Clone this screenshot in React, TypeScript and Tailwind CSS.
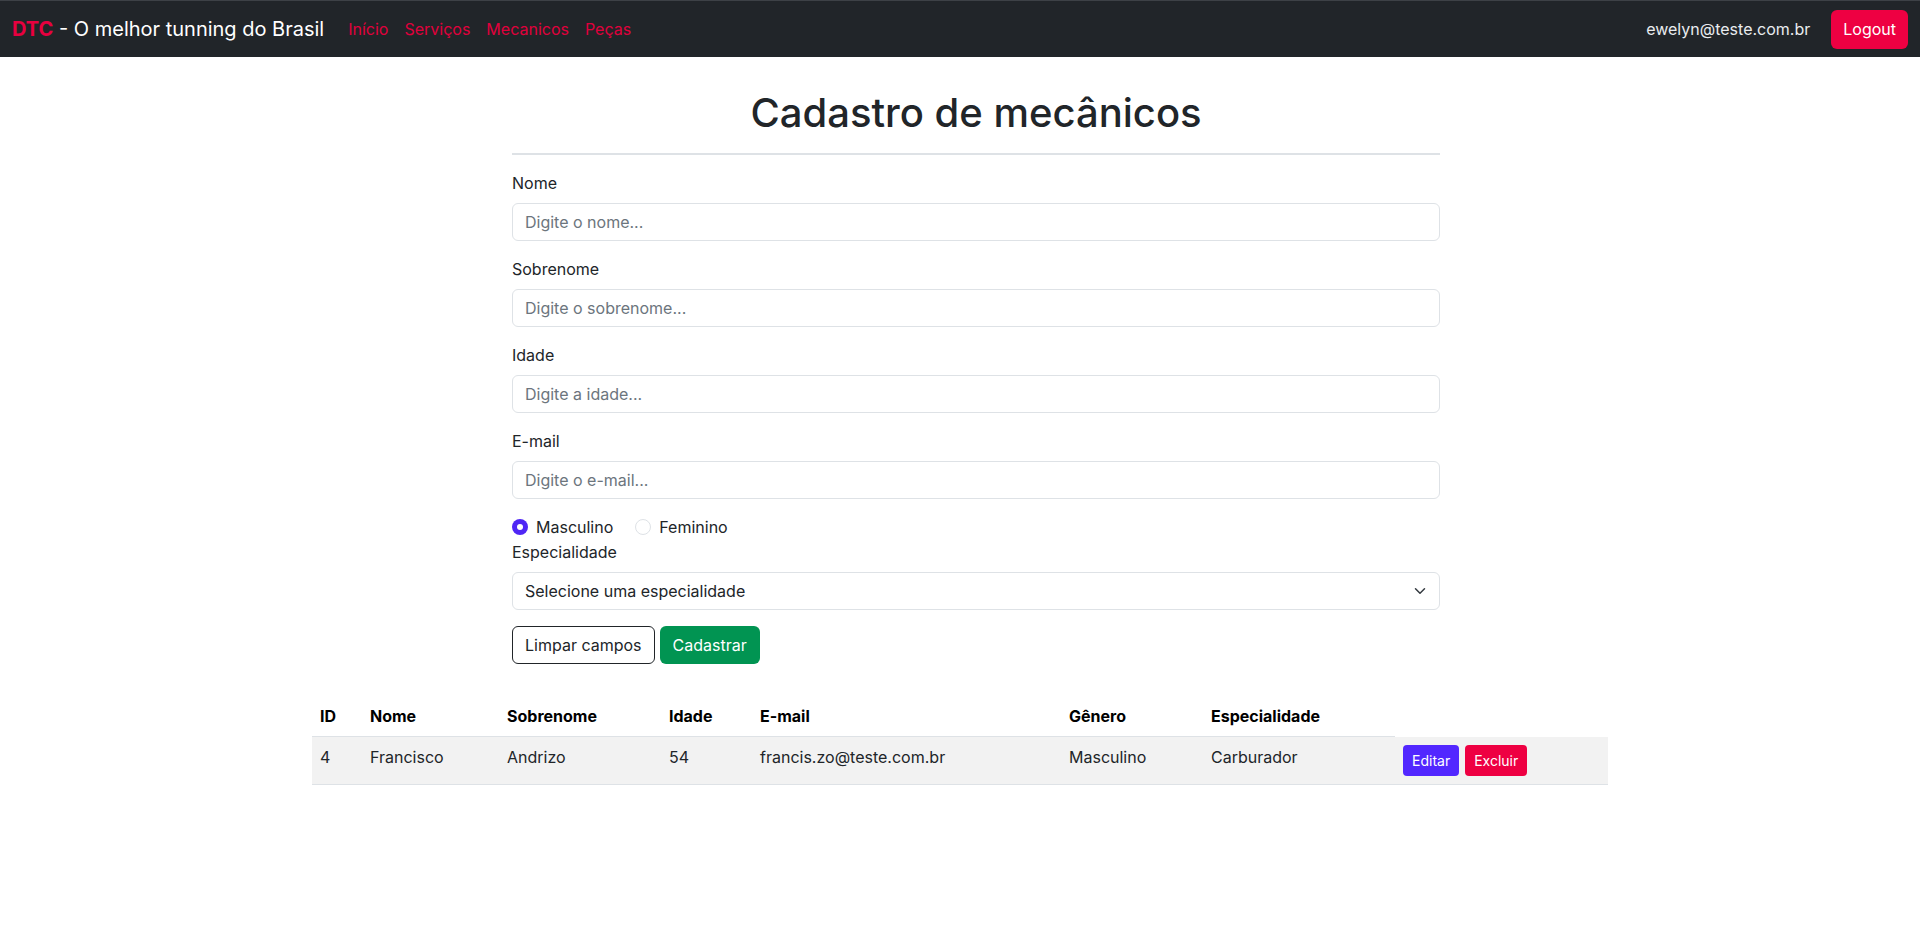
import { useState } from "react";

type Mecanico = {
  id: number;
  nome: string;
  sobrenome: string;
  idade: number;
  email: string;
  genero: string;
  especialidade: string;
};

const mecanicos: Mecanico[] = [
  {
    id: 4,
    nome: "Francisco",
    sobrenome: "Andrizo",
    idade: 54,
    email: "francis.zo@teste.com.br",
    genero: "Masculino",
    especialidade: "Carburador",
  },
];

const Navbar = () => (
  <nav className="flex h-[57px] items-center border-t border-[#3d4146] bg-[#212529] px-3">
    <a className="mr-4 text-[20px] leading-[30px] text-white" href="#">
      <span className="font-bold text-[#e8003f]">DTC</span> - O melhor tunning do Brasil
    </a>
    <ul className="flex">
      {["Início", "Serviços", "Mecanicos", "Peças"].map((item) => (
        <li key={item}>
          <a className="block px-2 py-2 text-[16px] text-[#e0003c]" href="#">
            {item}
          </a>
        </li>
      ))}
    </ul>
    <div className="ml-auto flex items-center gap-[21px]">
      <span className="text-[16px] text-[#e9ecef]">ewelyn@teste.com.br</span>
      <button className="h-[39px] rounded-[6px] bg-[#ee0042] px-3 text-[16px] text-white">
        Logout
      </button>
    </div>
  </nav>
);

const Campo = ({ label, placeholder }: { label: string; placeholder: string }) => (
  <div className="mb-4">
    <label className="mb-2 block leading-6">{label}</label>
    <input
      className="block h-[38px] w-full rounded-[6px] border border-[#dee2e6] px-3 text-[16px] outline-none placeholder:text-[#6c757d]"
      placeholder={placeholder}
    />
  </div>
);

const Radio = ({ label, checked, onClick }: { label: string; checked: boolean; onClick: () => void }) => (
  <label className="mr-[22px] inline-flex cursor-pointer items-center gap-2 leading-6" onClick={onClick}>
    {checked ? (
      <span className="flex h-4 w-4 items-center justify-center rounded-full bg-[#4f26f5]">
        <span className="h-[6px] w-[6px] rounded-full bg-white" />
      </span>
    ) : (
      <span className="h-4 w-4 rounded-full border border-[#dee2e6] bg-white" />
    )}
    {label}
  </label>
);

export default function App() {
  const [genero, setGenero] = useState("Masculino");

  return (
    <div className="min-h-[926px] bg-white text-[16px] text-[#212529]" style={{ fontFamily: "Inter, 'Liberation Sans', sans-serif" }}>
      <Navbar />

      <div className="mx-auto w-[1296px]">
        {/* formulário */}
        <div className="ml-[200px] w-[928px] pt-8">
          <h1 className="mb-4 text-center text-[40px] font-medium leading-[48px]">Cadastro de mecânicos</h1>
          <hr className="mb-4 border-t-2 border-[#dee2e6]" />

          <Campo label="Nome" placeholder="Digite o nome..." />
          <Campo label="Sobrenome" placeholder="Digite o sobrenome..." />
          <Campo label="Idade" placeholder="Digite a idade..." />
          <Campo label="E-mail" placeholder="Digite o e-mail..." />

          <div className="flex">
            <Radio label="Masculino" checked={genero === "Masculino"} onClick={() => setGenero("Masculino")} />
            <Radio label="Feminino" checked={genero === "Feminino"} onClick={() => setGenero("Feminino")} />
          </div>

          <div className="mb-4">
            <label className="mb-2 mt-[1px] block leading-6">Especialidade</label>
            <div className="relative">
              <select className="block h-[38px] w-full appearance-none rounded-[6px] border border-[#dee2e6] bg-white px-3 text-[16px] outline-none">
                <option>Selecione uma especialidade</option>
                <option>Carburador</option>
                <option>Suspensão</option>
                <option>Motor</option>
              </select>
              <svg
                className="pointer-events-none absolute right-3 top-[13px] h-3 w-4"
                viewBox="0 0 16 16"
                fill="none"
                stroke="#343a40"
                strokeWidth="2"
                strokeLinecap="round"
                strokeLinejoin="round"
              >
                <path d="m2 5 6 6 6-6" />
              </svg>
            </div>
          </div>

          <div className="flex gap-[5px]">
            <button className="h-[38px] rounded-[6px] border border-[#212529] px-3 text-[16px]">Limpar campos</button>
            <button className="h-[38px] rounded-[6px] bg-[#019452] px-[13px] text-[16px] text-white">Cadastrar</button>
          </div>
        </div>

        {/* tabela */}
        <table className="mt-[32px] w-full table-fixed border-collapse text-left">
          <colgroup>
            <col className="w-[50px]" />
            <col className="w-[137px]" />
            <col className="w-[162px]" />
            <col className="w-[91px]" />
            <col className="w-[309px]" />
            <col className="w-[142px]" />
            <col className="w-[192px]" />
            <col />
          </colgroup>
          <thead>
            <tr>
              {["ID", "Nome", "Sobrenome", "Idade", "E-mail", "Gênero", "Especialidade"].map((h) => (
                <th key={h} className="border-b border-[#dee2e6] p-2 font-bold leading-6 text-black">
                  {h}
                </th>
              ))}
            </tr>
          </thead>
          <tbody>
            {mecanicos.map((m) => (
              <tr key={m.id} className="border-b border-[#dee2e6] bg-[#f2f2f2]">
                <td className="p-2 align-top leading-6">{m.id}</td>
                <td className="p-2 align-top leading-6">{m.nome}</td>
                <td className="p-2 align-top leading-6">{m.sobrenome}</td>
                <td className="p-2 align-top leading-6">{m.idade}</td>
                <td className="p-2 align-top leading-6">{m.email}</td>
                <td className="p-2 align-top leading-6">{m.genero}</td>
                <td className="p-2 align-top leading-6">{m.especialidade}</td>
                <td className="p-2 align-top">
                  <div className="flex gap-[6px]">
                    <button className="h-[31px] rounded-[4px] bg-[#5227ff] px-[9px] text-[14px] text-white">Editar</button>
                    <button className="h-[31px] rounded-[4px] bg-[#ee0042] px-[9px] text-[14px] text-white">Excluir</button>
                  </div>
                </td>
              </tr>
            ))}
          </tbody>
        </table>
      </div>
    </div>
  );
}
